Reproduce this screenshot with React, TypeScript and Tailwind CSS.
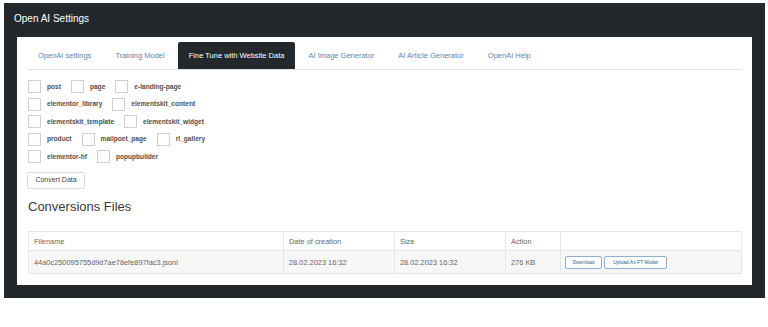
import React, { useState } from "react";

const TABS = [
  "OpenAI settings",
  "Training Model",
  "Fine Tune with Website Data",
  "AI Image Generator",
  "AI Article Generator",
  "OpenAI Help",
];

const POST_TYPES: string[][] = [
  ["post", "page", "e-landing-page"],
  ["elementor_library", "elementskit_content"],
  ["elementskit_template", "elementskit_widget"],
  ["product", "mailpoet_page", "rl_gallery"],
  ["elementor-hf", "popupbuilder"],
];

const Checkbox = ({ label }: { label: string }) => {
  const [checked, setChecked] = useState(false);
  return (
    <label className="flex items-center gap-[6px] mr-[10px] cursor-pointer">
      <span
        onClick={() => setChecked(!checked)}
        className="w-[13px] h-[13px] border border-[#cfcfcf] bg-white flex items-center justify-center text-[9px] text-[#2271b1]"
      >
        {checked ? "✓" : ""}
      </span>
      <span className="text-[6.6px] font-bold text-[#505050]">{label}</span>
    </label>
  );
};

export default function App() {
  const [active, setActive] = useState(2);

  return (
    <div className="min-h-[327px] bg-white font-['Liberation_Sans',Arial,sans-serif] pt-[3px] pl-[4px]">
      <div className="w-[761px] bg-[#23282d] px-[13px] pb-[13px]">
        <div className="h-[34px] pb-[4px] flex items-center -ml-[3px] text-[10px] text-white">
          Open AI Settings
        </div>
        <div className="bg-white px-[10px] pt-[5px] pb-[11px]">
          {/* Tabs */}
          <div className="flex gap-[2px] border-b border-[#e2e2e2]">
            {TABS.map((t, i) => (
              <button
                key={t}
                onClick={() => setActive(i)}
                className={
                  i === active
                    ? "h-[27px] px-[11px] text-[7.5px] text-white bg-[#23282d] rounded-t-[2px]"
                    : "h-[27px] px-[11px] text-[7.5px] text-[#5a86ad]"
                }
              >
                {t}
              </button>
            ))}
          </div>

          {/* Post types */}
          <div className="pt-[10px] pl-[1px] flex flex-col gap-[4.5px]">
            {POST_TYPES.map((row, i) => (
              <div key={i} className="flex items-center">
                {row.map((p) => (
                  <Checkbox key={p} label={p} />
                ))}
              </div>
            ))}
          </div>

          <button className="mt-[9px] h-[17px] w-[58px] border border-[#dcdcdc] rounded-[2px] text-[7px] text-[#444] bg-white">
            Convert Data
          </button>

          <h2 className="mt-[9px] ml-[1px] text-[13px] leading-[18px] text-[#3a3a3a]">
            Conversions Files
          </h2>

          {/* Table */}
          <table className="mt-[15px] ml-[1px] w-[714px] border-collapse text-[7.4px] text-[#666]">
            <thead>
              <tr className="h-[19px]">
                <th className="w-[255px] border border-[#e6e6e6] text-left font-normal pl-[5px]">
                  Filename
                </th>
                <th className="w-[111px] border border-[#e6e6e6] text-left font-normal pl-[5px]">
                  Date of creation
                </th>
                <th className="w-[111px] border border-[#e6e6e6] text-left font-normal pl-[5px]">
                  Size
                </th>
                <th className="w-[55px] border border-[#e6e6e6] text-left font-normal pl-[5px]">
                  Action
                </th>
                <th className="border border-[#e6e6e6]"></th>
              </tr>
            </thead>
            <tbody>
              <tr className="h-[23px] bg-[#f7f7f7]">
                <td className="border border-[#e6e6e6] pl-[5px]">
                  44a0c250095755d9d7ae78efe897fac3.jsonl
                </td>
                <td className="border border-[#e6e6e6] pl-[5px]">28.02.2023 16:32</td>
                <td className="border border-[#e6e6e6] pl-[5px]">28.02.2023 16:32</td>
                <td className="border border-[#e6e6e6] pl-[5px]">276 KB</td>
                <td className="border border-[#e6e6e6] pl-[4px]">
                  <div className="flex gap-[2px]">
                    <button className="h-[13px] w-[37px] border border-[#8fb0cc] rounded-[2px] bg-white text-[5px] text-[#2f5f8a]">
                      Download
                    </button>
                    <button className="h-[13px] w-[63px] border border-[#8fb0cc] rounded-[2px] bg-white text-[5px] text-[#2f5f8a]">
                      Upload As FT Model
                    </button>
                  </div>
                </td>
              </tr>
            </tbody>
          </table>
        </div>
      </div>
    </div>
  );
}
